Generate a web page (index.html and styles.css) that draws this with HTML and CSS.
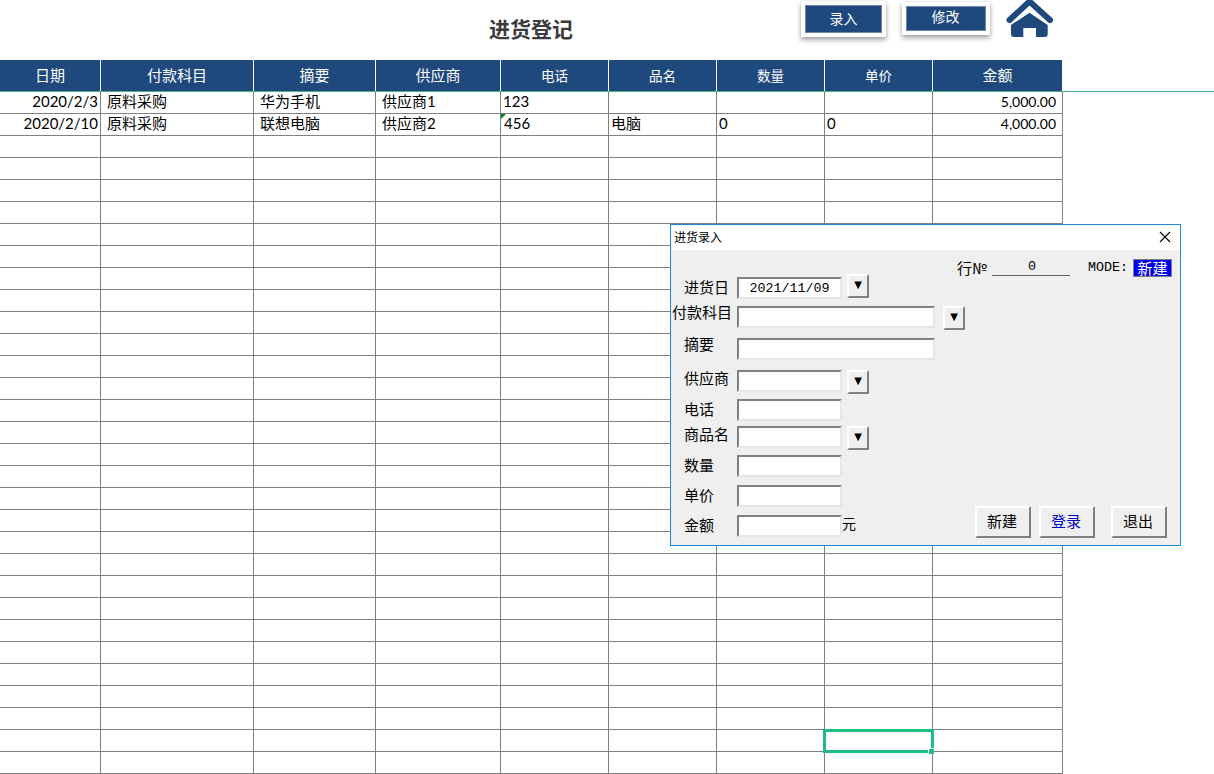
FILE: index.html
```html
<!DOCTYPE html>
<html lang="zh">
<head>
<meta charset="utf-8">
<title>进货登记</title>
<link rel="stylesheet" href="styles.css">
</head>
<body>
<header class="topbar">
  <h1 class="title">进货登记</h1>
  <div class="shape shape-entry"><span class="shape-inner">录入</span></div>
  <div class="shape shape-edit"><span class="shape-inner">修改</span></div>
  <svg class="home" viewBox="0 0 50 38" width="50" height="38" aria-label="首页">
    <path class="home-roof" d="M4.500 20 L24.500 1.500 L45 20"/>
    <path class="home-body" d="M24.500 12.700 L42.700 25 V34 Q42.700 37 40 37 H31 V28 H18.300 V37 H9 Q6 37 6 34 V25 Z"/>
  </svg>
</header>
<main class="sheet">
<table class="grid">
  <colgroup><col class="c1"><col class="c2"><col class="c3"><col class="c4"><col class="c5"><col class="c5"><col class="c5"><col class="c5"><col class="c6"></colgroup>
  <thead>
    <tr><th>日期</th><th>付款科目</th><th>摘要</th><th>供应商</th><th class="small">电话</th><th class="small">品名</th><th class="small">数量</th><th class="small">单价</th><th>金额</th></tr>
  </thead>
  <tbody>
    <tr><td class="date">2020/2/3</td><td class="text">原料采购</td><td class="text">华为手机</td><td class="text">供应商1</td><td class="tight">123</td><td class="tight"></td><td class="tight"></td><td class="tight"></td><td class="money">5,000.00</td></tr>
    <tr><td class="date">2020/2/10</td><td class="text">原料采购</td><td class="text">联想电脑</td><td class="text">供应商2</td><td class="tight flagged">456</td><td class="tight">电脑</td><td class="tight">0</td><td class="tight">0</td><td class="money">4,000.00</td></tr>
    <tr><td></td><td></td><td></td><td></td><td></td><td></td><td></td><td></td><td></td></tr>
    <tr><td></td><td></td><td></td><td></td><td></td><td></td><td></td><td></td><td></td></tr>
    <tr><td></td><td></td><td></td><td></td><td></td><td></td><td></td><td></td><td></td></tr>
    <tr><td></td><td></td><td></td><td></td><td></td><td></td><td></td><td></td><td></td></tr>
    <tr><td></td><td></td><td></td><td></td><td></td><td></td><td></td><td></td><td></td></tr>
    <tr><td></td><td></td><td></td><td></td><td></td><td></td><td></td><td></td><td></td></tr>
    <tr><td></td><td></td><td></td><td></td><td></td><td></td><td></td><td></td><td></td></tr>
    <tr><td></td><td></td><td></td><td></td><td></td><td></td><td></td><td></td><td></td></tr>
    <tr><td></td><td></td><td></td><td></td><td></td><td></td><td></td><td></td><td></td></tr>
    <tr><td></td><td></td><td></td><td></td><td></td><td></td><td></td><td></td><td></td></tr>
    <tr><td></td><td></td><td></td><td></td><td></td><td></td><td></td><td></td><td></td></tr>
    <tr><td></td><td></td><td></td><td></td><td></td><td></td><td></td><td></td><td></td></tr>
    <tr><td></td><td></td><td></td><td></td><td></td><td></td><td></td><td></td><td></td></tr>
    <tr><td></td><td></td><td></td><td></td><td></td><td></td><td></td><td></td><td></td></tr>
    <tr><td></td><td></td><td></td><td></td><td></td><td></td><td></td><td></td><td></td></tr>
    <tr><td></td><td></td><td></td><td></td><td></td><td></td><td></td><td></td><td></td></tr>
    <tr><td></td><td></td><td></td><td></td><td></td><td></td><td></td><td></td><td></td></tr>
    <tr><td></td><td></td><td></td><td></td><td></td><td></td><td></td><td></td><td></td></tr>
    <tr><td></td><td></td><td></td><td></td><td></td><td></td><td></td><td></td><td></td></tr>
    <tr><td></td><td></td><td></td><td></td><td></td><td></td><td></td><td></td><td></td></tr>
    <tr><td></td><td></td><td></td><td></td><td></td><td></td><td></td><td></td><td></td></tr>
    <tr><td></td><td></td><td></td><td></td><td></td><td></td><td></td><td></td><td></td></tr>
    <tr><td></td><td></td><td></td><td></td><td></td><td></td><td></td><td></td><td></td></tr>
    <tr><td></td><td></td><td></td><td></td><td></td><td></td><td></td><td></td><td></td></tr>
    <tr><td></td><td></td><td></td><td></td><td></td><td></td><td></td><td></td><td></td></tr>
    <tr><td></td><td></td><td></td><td></td><td></td><td></td><td></td><td></td><td></td></tr>
    <tr><td></td><td></td><td></td><td></td><td></td><td></td><td></td><td></td><td></td></tr>
    <tr><td></td><td></td><td></td><td></td><td></td><td></td><td></td><td></td><td></td></tr>
    <tr><td></td><td></td><td></td><td></td><td></td><td></td><td></td><td></td><td></td></tr>
  </tbody>
</table>
<div class="selection"><span class="handle"></span></div>
</main>
<section class="dialog">
  <div class="dialog-title">
    <span class="dialog-name">进货录入</span>
    <svg class="close" viewBox="0 0 12 12" width="12" height="12" aria-label="关闭"><path d="M1 1 L11 11 M11 1 L1 11"/></svg>
  </div>
  <div class="dialog-body">
    <div class="status">
      <span class="rowno-label">行№</span>
      <span class="rowno mono">0</span>
      <span class="mode mono">MODE:</span>
      <span class="mode-badge">新建</span>
    </div>
    <div class="row"><label class="label lift1">进货日</label><span class="field narrow mono">2021/11/09</span><span class="arrow arrow-up">▼</span></div>
    <div class="row r-gap7"><label class="label label-wide lift5">付款科目</label><span class="field wide"></span><span class="arrow arrow-far">▼</span></div>
    <div class="row r-gap10"><label class="label lift5">摘要</label><span class="field wide"></span></div>
    <div class="row r-gap10"><label class="label lift3">供应商</label><span class="field narrow"></span><span class="arrow">▼</span></div>
    <div class="row r-gap7"><label class="label lift1">电话</label><span class="field narrow"></span></div>
    <div class="row r-gap5"><label class="label lift3">商品名</label><span class="field narrow"></span><span class="arrow">▼</span></div>
    <div class="row r-gap7"><label class="label lift1">数量</label><span class="field narrow"></span></div>
    <div class="row r-gap8"><label class="label lift1">单价</label><span class="field narrow"></span></div>
    <div class="row r-gap8">
      <label class="label lift1">金额</label><span class="field narrow"></span><span class="unit">元</span>
      <div class="actions">
        <button class="btn">新建</button>
        <button class="btn btn-blue">登录</button>
        <button class="btn btn-exit">退出</button>
      </div>
    </div>
  </div>
</section>
</body>
</html>
```
FILE: styles.css
```css
* { box-sizing: border-box; }
html, body { margin: 0; padding: 0; }
body {
  width: 1214px;
  height: 774px;
  overflow: hidden;
  background: #fff;
  color: #000;
  font-family: Lato, "Noto Sans CJK SC", sans-serif;
}

/* top strip */
.topbar {
  display: flex;
  align-items: flex-start;
  height: 60px;
  padding-left: 489px;
}
.title {
  margin: 14px 0 0;
  width: 84px;
  font: bold 21px/28px "Noto Sans CJK SC", sans-serif;
  color: #3b3b3b;
  white-space: nowrap;
}
.shape {
  display: flex;
  background: #fff;
  padding: 4px;
  box-shadow: 0 3px 5px rgba(0, 0, 0, .35), 0 0 2px rgba(0, 0, 0, .12);
}
.shape-inner {
  flex: 1;
  background: #1f497d;
  border: 1px solid #6f86a8;
  color: #fff;
  text-align: center;
  font: 14px/24px "Noto Sans CJK SC", sans-serif;
}
.shape-entry { width: 85px; height: 36px; margin: 1px 0 0 228px; }
.shape-edit { width: 88px; height: 33px; margin: 2px 0 0 16px; }
.shape-edit .shape-inner { line-height: 19px; padding-right: 1px; }
.home { margin-left: 15px; display: block; }
.home-roof { fill: none; stroke: #1f497d; stroke-width: 6; stroke-linecap: round; stroke-linejoin: miter; }
.home-body { fill: #1f497d; }

/* spreadsheet */
.sheet { position: relative; width: 1214px; }
.sheet::after {
  content: "";
  position: absolute;
  left: 0; right: 0; top: 31px;
  height: 1px;
  background: #4fb08a;
}
.grid {
  table-layout: fixed;
  width: 1063px;
  border-collapse: separate;
  border-spacing: 0;
}
.c1 { width: 101px; }
.c2 { width: 153px; }
.c3 { width: 122px; }
.c4 { width: 125px; }
.c5 { width: 108px; }
.c6 { width: 130px; }
.grid th {
  height: 32px;
  padding: 0 0 2px;
  background: #1f497d;
  border-right: 1px solid #fff;
  color: #fff;
  font: 400 15px/20px "Noto Sans CJK SC", sans-serif;
  text-align: center;
}
.grid th.small { font-size: 13.5px; }
.grid td {
  height: 22px;
  padding: 0 0 2px;
  border-right: 1px solid #808080;
  border-bottom: 1px solid #808080;
  font: 15px/19px Lato, "Noto Sans CJK SC", sans-serif;
  white-space: nowrap;
  overflow: hidden;
}
.grid td.date { text-align: right; padding-right: 2px; }
.grid td.text { padding-left: 6px; }
.grid td.tight { padding-left: 2px; }
.grid td.money { text-align: right; padding-right: 6px; font-size: 14px; }
.grid td.flagged { position: relative; padding-left: 3px; }
.flagged::before {
  content: "";
  position: absolute;
  left: 0; top: 0;
  border-top: 5px solid #0a7a1e;
  border-right: 5px solid transparent;
}
.selection {
  position: absolute;
  left: 823px;
  top: 669px;
  width: 111px;
  height: 24px;
  border: 3px solid #20bd80;
}
.handle {
  position: absolute;
  right: -3px;
  bottom: -4px;
  width: 6px;
  height: 6px;
  background: #20bd80;
  border: 1px solid #fff;
  border-width: 1px 0 0 1px;
}

/* dialog */
.dialog {
  position: absolute;
  left: 670px;
  top: 224px;
  width: 511px;
  height: 322px;
  background: #efefef;
  border: 1px solid #1e88d8;
  font-family: "Noto Sans CJK SC", sans-serif;
  font-size: 15px;
}
.dialog-title {
  display: flex;
  align-items: center;
  justify-content: space-between;
  height: 25px;
  padding: 0 9px 2px 3px;
  background: #fff;
  font-size: 12px;
}
.close { display: block; }
.close path { fill: none; stroke: #000; stroke-width: 1.1; }
.dialog-body { padding-top: 9px; }
.mono { font-family: "Liberation Mono", monospace; font-size: 13.33px; }
.status {
  display: flex;
  align-items: center;
  justify-content: flex-end;
  height: 18px;
  padding-right: 8px;
  line-height: 18px;
}
.rowno-label { width: 30px; white-space: nowrap; }
.rowno {
  width: 78px;
  margin-left: 5px;
  padding-left: 2px;
  height: 16px;
  line-height: 14px;
  border-bottom: 1px solid #666;
  text-align: center;
}
.mode { width: 40px; margin-left: 18px; }
.mode-badge {
  width: 39px;
  height: 18px;
  margin-left: 5px;
  background: #0000f0;
  border: 1px solid #808080;
  color: #fff;
  text-align: center;
  line-height: 15px;
}
.row {
  display: flex;
  align-items: flex-start;
  height: 22px;
}
.r-gap5 { margin-top: 5px; }
.r-gap7 { margin-top: 7px; }
.r-gap8 { margin-top: 8px; }
.r-gap10 { margin-top: 10px; }
.label {
  width: 66px;
  padding-left: 13px;
  height: 22px;
  line-height: 22px;
  white-space: nowrap;
}
.label-wide { padding-left: 1px; }
.lift1 { margin-top: -1px; }
.lift3 { margin-top: -3px; }
.lift5 { margin-top: -5px; }
.field {
  display: block;
  height: 22px;
  background: #fff;
  border: 2px solid;
  border-color: #808080 #e6e6e6 #e6e6e6 #808080;
  text-align: center;
  line-height: 20px;
}
.narrow { width: 105px; }
.wide { width: 198px; }
.arrow {
  display: flex;
  align-items: center;
  justify-content: center;
  width: 22px;
  height: 24px;
  margin-left: 5px;
  padding-bottom: 3px;
  background: #efefef;
  border: 2px solid;
  border-color: #fff #808080 #808080 #fff;
  font: 10px/1 "DejaVu Sans", sans-serif;
}
.arrow-up { margin-top: -3px; }
.arrow-far { margin-left: 8px; }
.unit { margin-left: 0; line-height: 16px; font-size: 14px; }
.actions {
  display: flex;
  margin: -9px 0 0 auto;
  padding-right: 13px;
}
.btn {
  width: 56px;
  height: 32px;
  margin: 0 0 0 8px;
  padding: 0 2px 3px 0;
  background: #efefef;
  border: 2px solid;
  border-color: #fff #808080 #808080 #fff;
  border-radius: 0;
  color: #000;
  font: 15px/20px "Noto Sans CJK SC", sans-serif;
}
.btn-blue { color: #0000c8; }
.btn-exit { margin-left: 16px; }
```
